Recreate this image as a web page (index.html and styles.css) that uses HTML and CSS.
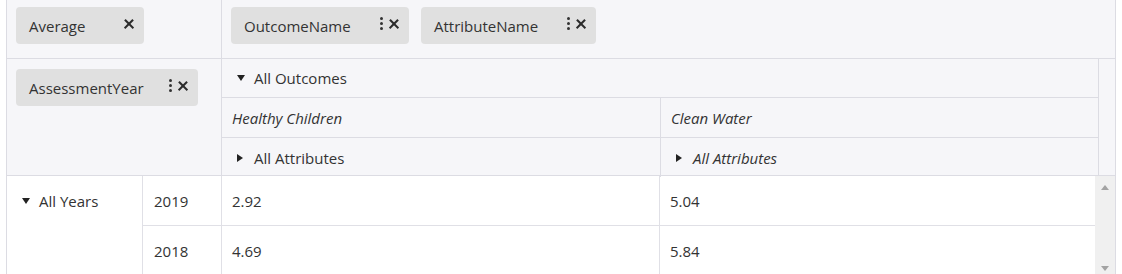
FILE: index.html
```html
<!DOCTYPE html>
<html lang="en">
<head>
    <meta charset="UTF-8">
    <title>Pivot Grid</title>
    <link rel="stylesheet" href="styles.css">
</head>
<body>
    <div class="pivot">
        <!-- field chips -->
        <div class="top-row">
            <div class="corner">
                <div class="chip chip-data"><span>Average</span><span class="tools"><span class="close"></span></span></div>
            </div>
            <div class="col-area">
                <div class="chip chip-outcome"><span>OutcomeName</span><span class="tools"><span class="dots"><i></i><i></i><i></i></span><span class="close"></span></span></div>
                <div class="chip chip-attr"><span>AttributeName</span><span class="tools"><span class="dots"><i></i><i></i><i></i></span><span class="close"></span></span></div>
            </div>
        </div>

        <!-- column headers -->
        <div class="head-row">
            <div class="corner row-area">
                <div class="chip chip-year"><span>AssessmentYear</span><span class="tools"><span class="dots"><i></i><i></i><i></i></span><span class="close"></span></span></div>
            </div>
            <div class="col-heads">
                <div class="hcell full"><span class="tri down"></span>All Outcomes</div>
                <div class="hsplit">
                    <div class="hcell left"><em>Healthy Children</em></div>
                    <div class="hcell"><em>Clean Water</em></div>
                </div>
                <div class="hsplit last">
                    <div class="hcell left"><span class="tri right"></span>All Attributes</div>
                    <div class="hcell"><span class="tri right"></span><em>All Attributes</em></div>
                </div>
            </div>
            <div class="gutter"></div>
        </div>

        <!-- data -->
        <div class="body-grid">
            <div class="rcell years"><div class="line"><span class="tri down"></span>All Years</div></div>
            <div class="rcell yr">2019</div>
            <div class="dcell">2.92</div>
            <div class="dcell wide">5.04</div>
            <div class="scrollbar"><span class="arrow up"></span><span class="arrow dn"></span></div>
            <div class="rcell yr last">2018</div>
            <div class="dcell last">4.69</div>
            <div class="dcell wide last">5.84</div>
        </div>
    </div>
</body>
</html>
```

FILE: styles.css
```css
body {
    margin: 0;
    background: white;
    font-family: "Open Sans", "Noto Sans", sans-serif;
    font-size: 15px;
    color: #333;
}
.pivot {
    margin-left: 6px;
    width: 1110px;
    border-left: 1px solid #dcdce3;
    border-right: 1px solid #dcdce3;
    box-sizing: border-box;
    background: #f6f6f9;
}
.top-row {
    display: flex;
    height: 59px;
    border-bottom: 1px solid #dcdce3;
    box-sizing: border-box;
}
.corner {
    width: 215px;
    border-right: 1px solid #dcdce3;
    box-sizing: border-box;
    padding: 7px 0 0 9px;
}
.col-area {
    display: flex;
    gap: 12px;
    padding: 7px 0 0 9px;
}
.chip {
    height: 37px;
    background: #e0e0e0;
    border-radius: 4px;
    display: flex;
    align-items: center;
    justify-content: space-between;
    padding: 0 10px 0 13px;
    box-sizing: border-box;
}
.chip > span:first-child {
    padding-top: 1px;
}
.chip-data { width: 128px; }
.chip-outcome { width: 178px; }
.chip-attr { width: 175px; }
.chip-year { width: 182px; }
.tools {
    display: flex;
    align-items: center;
    gap: 6px;
    margin-top: -4px;
}
.dots {
    display: flex;
    flex-direction: column;
    gap: 2px;
}
.dots i {
    width: 3px;
    height: 3px;
    border-radius: 50%;
    background: #333;
}
.close {
    width: 10px;
    height: 10px;
    position: relative;
}
.close::before,
.close::after {
    content: "";
    position: absolute;
    left: -1px;
    top: 4px;
    width: 12px;
    height: 2.4px;
    background: #2b2b2b;
    transform: rotate(45deg);
}
.close::after {
    transform: rotate(-45deg);
}
.head-row {
    display: flex;
    height: 117px;
    border-bottom: 1px solid #dcdce3;
    box-sizing: border-box;
}
.row-area {
    padding-top: 10px;
}
.col-heads {
    width: 877px;
    border-right: 1px solid #dcdce3;
    box-sizing: border-box;
}
.gutter {
    flex: 1;
}
.hcell {
    height: 39px;
    display: flex;
    align-items: center;
    padding-left: 10px;
    box-sizing: border-box;
}
.hcell.full {
    border-bottom: 1px solid #dcdce3;
    padding-left: 15px;
}
.hsplit {
    display: flex;
    border-bottom: 1px solid #dcdce3;
}
.hsplit.last {
    border-bottom: none;
}
.hsplit .hcell {
    flex: 1;
}
.hsplit .hcell.left {
    flex: none;
    width: 439px;
    border-right: 1px solid #dcdce3;
}
.hsplit.last .hcell {
    padding-left: 15px;
}
.tri {
    display: inline-block;
    width: 0;
    height: 0;
    margin-right: 9px;
}
.tri.down {
    border-left: 4px solid transparent;
    border-right: 4px solid transparent;
    border-top: 6px solid #222;
}
.tri.right {
    border-top: 4px solid transparent;
    border-bottom: 4px solid transparent;
    border-left: 6px solid #222;
    margin-right: 11px;
}
.body-grid {
    display: grid;
    grid-template-columns: 136px 79px 438px 435px 20px;
    grid-template-rows: 50px 50px;
    background: white;
}
.rcell,
.dcell {
    display: flex;
    align-items: center;
    padding-left: 10px;
    border-right: 1px solid #e0e0e6;
    border-bottom: 1px solid #e0e0e6;
}
.rcell.years {
    grid-row: span 2;
    align-items: flex-start;
    padding-top: 15px;
    padding-left: 15px;
    border-bottom: none;
}
.line {
    display: flex;
    align-items: center;
}
.rcell.yr {
    padding-left: 11px;
}
.dcell.wide {
    border-right: none;
}
.last {
    border-bottom: none;
}
.scrollbar {
    grid-row: span 2;
    background: #f0f0f0;
    display: flex;
    flex-direction: column;
    justify-content: space-between;
    align-items: center;
    padding: 9px 0 5px;
}
.arrow {
    width: 0;
    height: 0;
    border-left: 4px solid transparent;
    border-right: 4px solid transparent;
}
.arrow.up {
    border-bottom: 5px solid #a3a3a3;
}
.arrow.dn {
    border-top: 5px solid #a3a3a3;
}
```
